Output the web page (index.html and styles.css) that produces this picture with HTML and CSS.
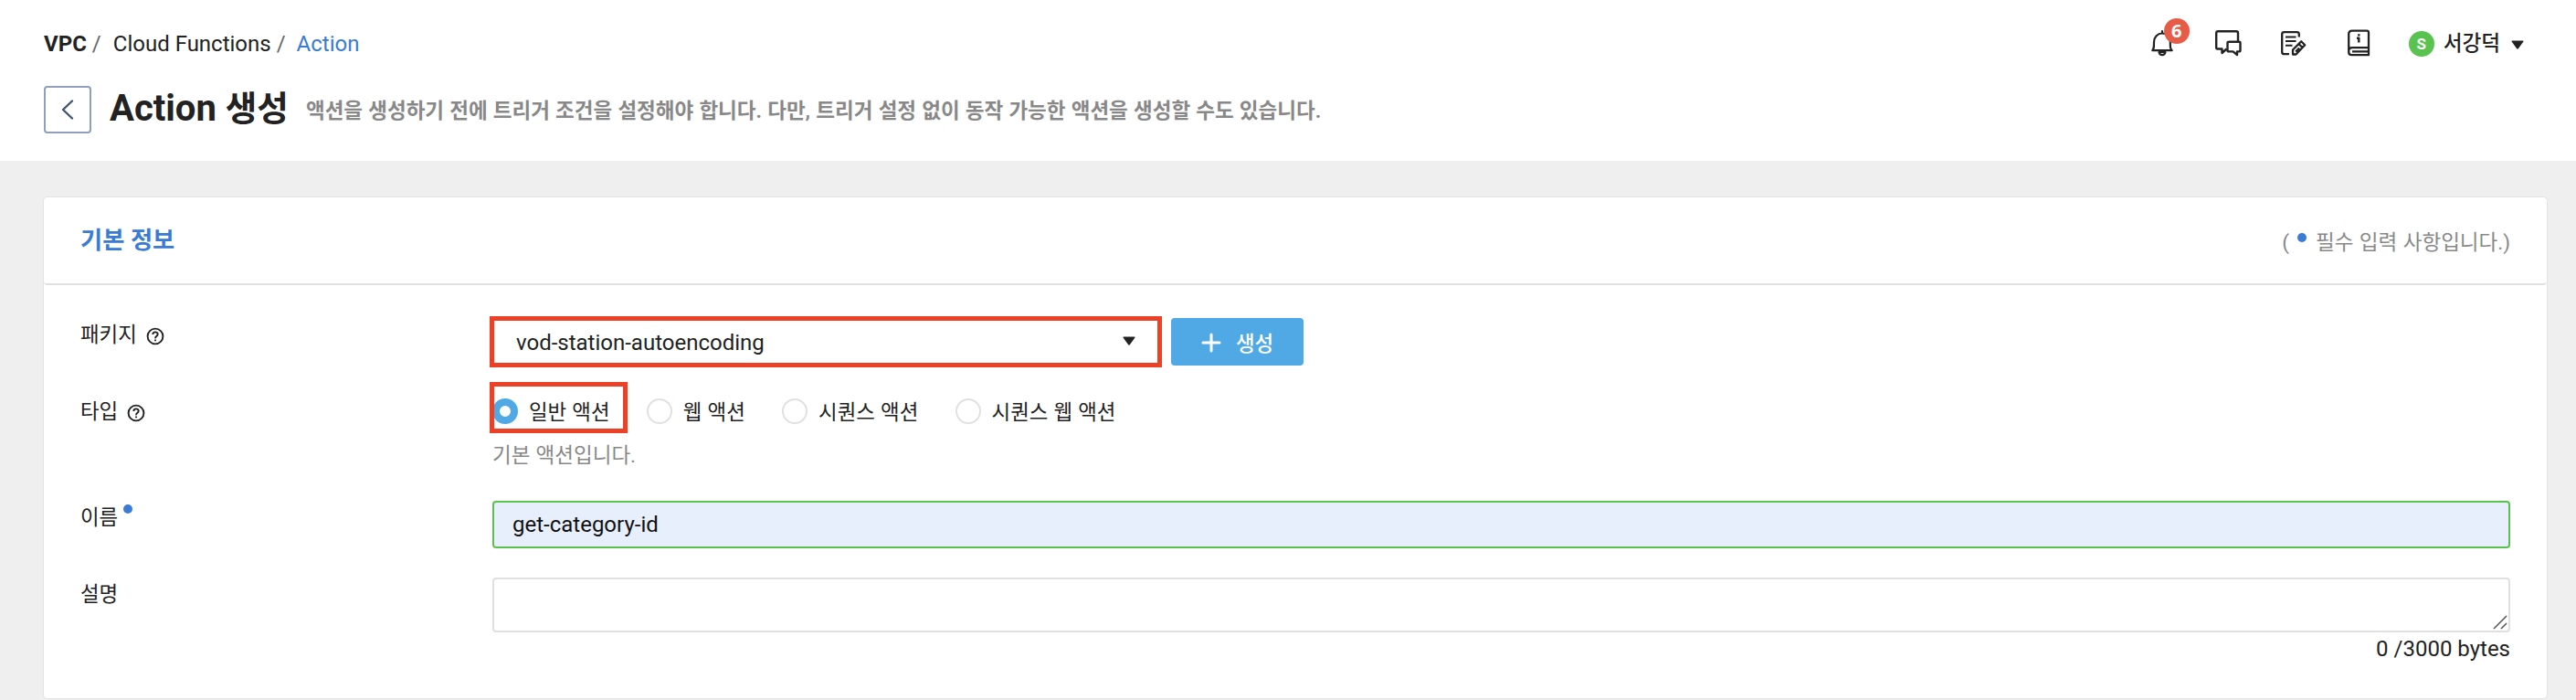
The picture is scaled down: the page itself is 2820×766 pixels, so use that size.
FILE: index.html
```html
<!DOCTYPE html>
<html lang="ko">
<head>
<meta charset="utf-8">
<title>Action 생성</title>
<link rel="stylesheet" href="styles.css">
</head>
<body>
<header class="page-header">
  <div class="topbar">
    <nav class="breadcrumb">
      <b>VPC</b><span class="slash">/</span><span class="crumb">Cloud Functions</span><span class="slash">/</span><a class="crumb-current">Action</a>
    </nav>
    <div class="tools">
      <span class="tool bell">
        <svg width="32" height="32" viewBox="0 0 32 32" fill="none" stroke="#222" stroke-width="2.2" stroke-linejoin="round" stroke-linecap="round"><path d="M16 4V2M5.300 23.200H26.700C24.800 21.300 24.800 20 24.800 14C24.800 8.500 21 4.500 16 4.500S7 8.500 7 14C7 20 7 21.300 5.300 23.200Z"/><path d="M12.500 25C13 27.500 14 28.200 16 28.200S19 27.500 19.500 25Z"/></svg>
        <span class="badge">6</span>
      </span>
      <span class="tool chat">
        <svg width="32" height="32" viewBox="0 0 32 32" fill="none" stroke="#222" stroke-width="2.400" stroke-linejoin="round"><path d="M14.500 21.500L9.500 26V21.500H4.500Q3.200 21.500 3.200 20V4.500Q3.200 2.200 5 2.200H25Q27 2.200 27 4V13"/><path d="M17.500 13.800H28Q29.500 13.800 29.500 15V23Q29.500 24.400 28 24.400H26V28L21.500 24.400H17Q15.500 24.400 15.500 23V15Q15.500 13.800 17.500 13.800Z"/></svg>
      </span>
      <span class="tool note">
        <svg width="32" height="32" viewBox="0 0 32 32" fill="none" stroke="#222" stroke-width="2.300" stroke-linejoin="round"><path d="M11 27.200H5.500Q3.200 27.200 3.200 25V5.500Q3.200 3.200 5.500 3.200H19.500Q21.800 3.200 21.800 5.500V8.500"/><path d="M7 8.500H18.500M7 13H18.500M7 17.700H14.500" stroke-width="2"/><path d="M15 27.500V22.500L24.200 13.300L28.200 17.300L18.500 27.500ZM21.500 16L25.500 20M18.200 24.500L22 20.500"/></svg>
      </span>
      <span class="tool book">
        <svg width="32" height="32" viewBox="0 0 32 32" fill="none" stroke="#222" stroke-width="2.300" stroke-linejoin="round"><path d="M27 21V3.500Q27 1.700 25 1.700H9Q5.200 1.700 5.200 5.500V25Q5.200 28.200 8.500 28.200H27V20.200H9Q5.200 20.200 5.200 24M27 24.300H9"/><path d="M16.300 5.200V7.600M14 9.700H16.300V14.500" stroke-width="2.400"/></svg>
      </span>
      <span class="avatar">S</span>
      <span class="user-name">서강덕</span>
      <svg class="caret" width="14" height="10" viewBox="0 0 14 10"><path d="M1 0.500H13Q14 0.500 13.400 1.500L8 9Q7 10.300 6 9L0.600 1.500Q0 0.500 1 0.500Z" fill="#222"/></svg>
    </div>
  </div>
  <div class="title-row">
    <button class="back" aria-label="뒤로"><svg width="16" height="24" viewBox="0 0 16 24" fill="none" stroke="#3f5671" stroke-width="2.400" stroke-linecap="round" stroke-linejoin="round"><path d="M13 2.500L3 12L13 21.500"/></svg></button>
    <h1 class="title">Action <span class="title-ko">생성</span></h1>
    <p class="subtitle">액션을 생성하기 전에 트리거 조건을 설정해야 합니다. 다만, 트리거 설정 없이 동작 가능한 액션을 생성할 수도 있습니다.</p>
  </div>
</header>
<main class="content">
  <section class="card">
    <div class="card-head">
      <h2 class="card-title">기본 정보</h2>
      <p class="required-note">(<i class="dot note-dot"></i>필수 입력 사항입니다.)</p>
    </div>
    <div class="card-body">
      <div class="row">
        <div class="label">패키지<svg class="help" width="20" height="20" viewBox="0 0 20 20" fill="none" stroke="#222" stroke-width="1.900"><circle cx="10" cy="10" r="8.400"/><path d="M7.300 8C7.300 4.600 12.700 4.600 12.700 7.800C12.700 9.800 10 9.800 10 12.200M10 13.400V15.200"/></svg></div>
        <div class="field package-field">
          <div class="select highlight"><span>vod-station-autoencoding</span><svg width="14" height="10" viewBox="0 0 14 10"><path d="M1 0.500H13Q14 0.500 13.400 1.500L8 9Q7 10.300 6 9L0.600 1.500Q0 0.500 1 0.500Z" fill="#222"/></svg></div>
          <button class="create"><svg width="22" height="22" viewBox="0 0 22 22" stroke="#fff" stroke-width="3" stroke-linecap="round"><path d="M11 2V20M2 11H20"/></svg><span>생성</span></button>
        </div>
      </div>
      <div class="row">
        <div class="label">타입<svg class="help" width="20" height="20" viewBox="0 0 20 20" fill="none" stroke="#222" stroke-width="1.900"><circle cx="10" cy="10" r="8.400"/><path d="M7.300 8C7.300 4.600 12.700 4.600 12.700 7.800C12.700 9.800 10 9.800 10 12.200M10 13.400V15.200"/></svg></div>
        <div class="field">
          <div class="radios">
            <label class="option option-marked"><i class="radio checked"></i><span>일반 액션</span></label>
            <label class="option"><i class="radio"></i><span>웹 액션</span></label>
            <label class="option"><i class="radio"></i><span>시퀀스 액션</span></label>
            <label class="option"><i class="radio"></i><span>시퀀스 웹 액션</span></label>
          </div>
          <p class="hint">기본 액션입니다.</p>
        </div>
      </div>
      <div class="row">
        <div class="label">이름<i class="dot label-dot"></i></div>
        <div class="field"><div class="input">get-category-id</div></div>
      </div>
      <div class="row">
        <div class="label">설명</div>
        <div class="field">
          <div class="textarea"><svg width="16" height="16" viewBox="0 0 16 16" stroke="#555" stroke-width="1.500"><path d="M1 15L15 1M9 15L15 9"/></svg></div>
          <p class="counter">0 /3000 bytes</p>
        </div>
      </div>
    </div>
  </section>
</main>
</body>
</html>
```
FILE: styles.css
```css
* { box-sizing: border-box; }
body {
  margin: 0;
  height: 766px;
  overflow: hidden;
  background: #efefef;
  color: #222;
  font-family: Roboto, "Noto Sans CJK KR", sans-serif;
  font-size: 24px;
}
h1, h2, p { margin: 0; }
i { font-style: normal; }
button { font: inherit; padding: 0; }
svg { display: block; flex: none; }

.page-header { height: 176px; background: #fff; padding: 0 48px; }
.topbar { height: 94px; display: flex; justify-content: space-between; }
.breadcrumb { display: flex; line-height: 28px; padding-top: 34px; }
.slash { margin-left: 6px; color: #666; }
.crumb { margin-left: 13px; }
.crumb-current { margin-left: 12px; color: #3a7bd5; }

.tools { display: flex; align-items: center; height: 96px; padding-right: 9px; }
.tool { position: relative; width: 32px; height: 32px; margin-right: 40px; }
.note { margin-right: 39px; }
.book { margin-right: 35px; }
.badge {
  position: absolute;
  left: 18px;
  top: -12px;
  width: 28px;
  height: 28px;
  border-radius: 50%;
  background: #e65c47;
  color: #fff;
  font: bold 20px/28px "Noto Sans", sans-serif;
  text-align: center;
}
.avatar {
  width: 28px;
  height: 28px;
  margin-left: 4px;
  border-radius: 50%;
  background: #5ac34f;
  color: #fff;
  font-size: 17px;
  font-weight: 700;
  line-height: 29px;
  text-align: center;
}
.user-name { margin-left: 10px; font-size: 22.6px; font-weight: 500; line-height: 32px; }
.caret { margin: 2px 0 0 12px; }

.title-row { display: flex; height: 52px; }
.back {
  width: 52px;
  height: 52px;
  display: flex;
  align-items: center;
  justify-content: center;
  border: 2px solid #8fa0bb;
  border-radius: 4px;
  background: #fff;
}
.title { margin-left: 20px; font-size: 40px; font-weight: 700; line-height: 50px; white-space: nowrap; }
.title-ko { font-size: 37.6px; }
.subtitle { margin-left: 19px; color: #888; font-size: 22.5px; font-weight: 700; line-height: 54px; word-spacing: 0.6px; white-space: nowrap; }

.content { padding: 40px 32px 0 48px; }
.card { height: 548px; border-radius: 4px; background: #fff; box-shadow: 0 0 0 1px #e4e4e4; }
.card-head {
  height: 96px;
  display: flex;
  justify-content: space-between;
  padding: 0 40px;
  border-bottom: 2px solid #e0e0e0;
  border-radius: 4px;
}
.card-title { color: #3a7bd5; font-size: 26.3px; font-weight: 700; line-height: 94px; }
.required-note { color: #888; font-size: 22.5px; line-height: 99px; word-spacing: 0.9px; white-space: nowrap; }
.dot { display: inline-block; width: 10px; height: 10px; border-radius: 50%; background: #3a7bd5; vertical-align: 8px; }
.note-dot { margin: 0 10px 0 9px; }
.card-body { display: flex; flex-direction: column; gap: 32px; padding: 36px 40px 0; }
.row { display: grid; grid-template-columns: 451px 1fr; }
.label { display: flex; align-items: center; height: 36px; font-size: 22.4px; line-height: 36px; }
.help { margin: 3px 0 0 10px; }
.label-dot { margin: 0 0 18px 6px; }

.package-field { display: flex; gap: 14px; }
.select {
  position: relative;
  width: 729px;
  height: 52px;
  display: flex;
  align-items: center;
  justify-content: space-between;
  padding: 1px 25px 0 26px;
}
.select svg { margin-top: -4px; }
.highlight::after, .option-marked::after {
  content: "";
  position: absolute;
  inset: -2px -4px -2px -3px;
  border: 5px solid #ec4127;
}
.create {
  width: 145px;
  height: 52px;
  display: flex;
  align-items: center;
  gap: 16px;
  padding: 0 0 0 33px;
  border: 0;
  border-radius: 4px;
  background: #50a9e4;
  color: #fff;
  font-size: 22.4px;
  font-weight: 500;
}
.create svg { margin-top: 2px; }
.radios { display: flex; height: 36px; }
.option { position: relative; display: flex; align-items: center; height: 36px; margin-right: 40.3px; font-size: 22.4px; line-height: 36px; word-spacing: 0.6px; white-space: nowrap; }
.option span { padding-top: 1px; }
.option-marked::after { inset: -14px -19px -6px -3px; }
.radio { width: 28px; height: 28px; margin-right: 12px; border: 2px solid #e1e1e1; border-radius: 50%; background: #fff; }
.checked { border: 8px solid #50a9e4; }
.hint { margin-top: 12px; color: #888; font-size: 22.5px; line-height: 36px; word-spacing: 0.6px; }
.input {
  height: 52px;
  padding-left: 20px;
  border: 2px solid #5ac34f;
  border-radius: 4px;
  background: #e8effc;
  color: #111;
  line-height: 48px;
}
.textarea {
  height: 60px;
  display: flex;
  align-items: flex-end;
  justify-content: flex-end;
  padding: 1px;
  border: 2px solid #e0e0e0;
  border-radius: 4px;
}
.counter { line-height: 28px; margin-top: 4px; text-align: right; }
```
